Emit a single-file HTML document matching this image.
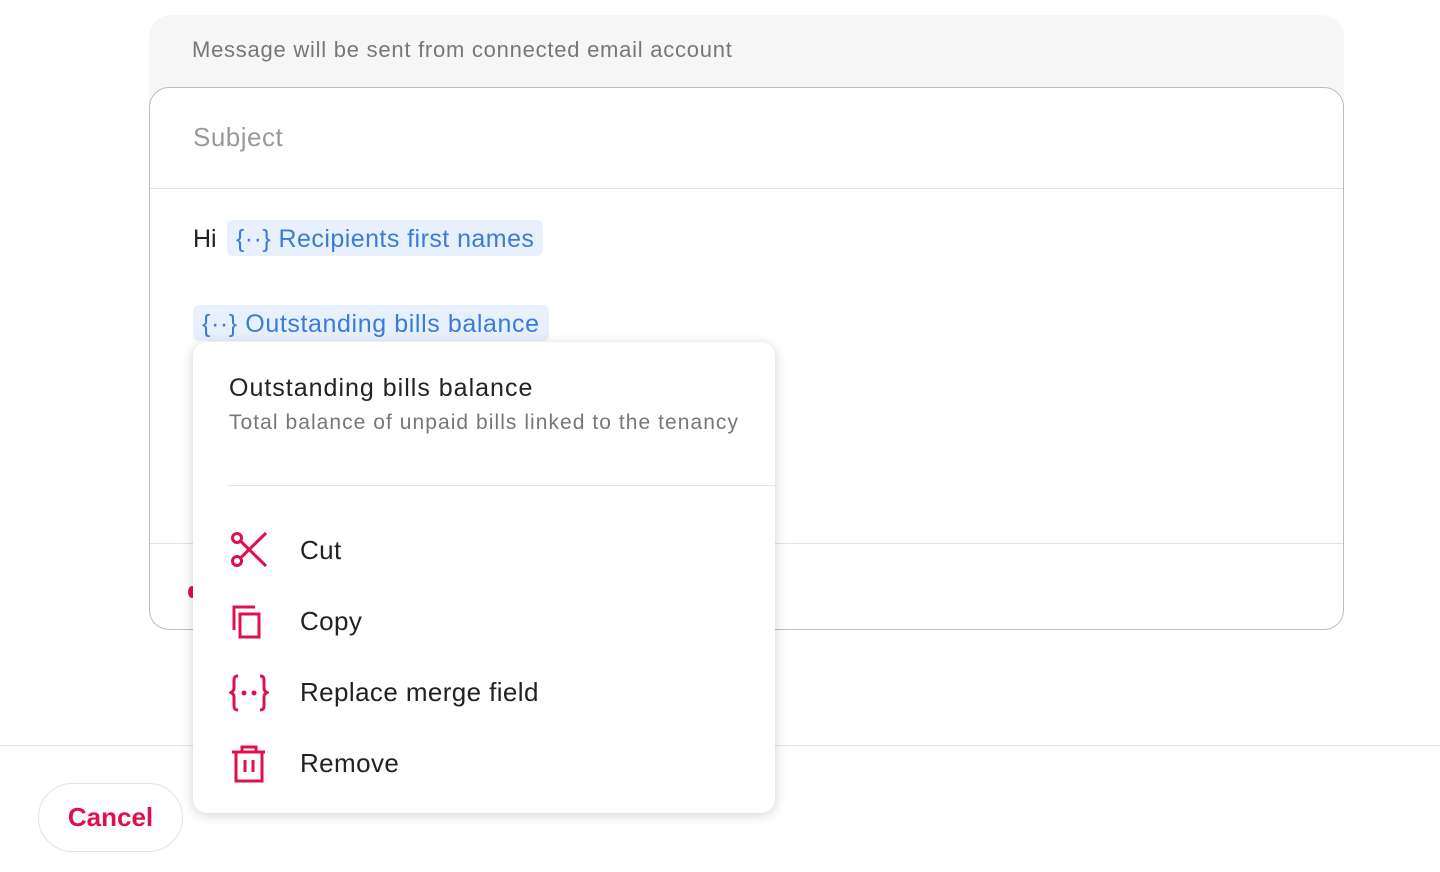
<!DOCTYPE html>
<html><head><meta charset="utf-8"><style>
*{box-sizing:border-box;margin:0;padding:0}
body{width:1440px;height:872px;background:#fff;font-family:"Liberation Sans",Arial,sans-serif;position:relative;overflow:hidden}
.gray{position:absolute;left:149px;top:15px;width:1195px;height:100px;background:#f6f6f6;border-radius:22px 22px 0 0}
.gray span{position:absolute;left:43px;top:22px;font-size:22px;color:#777;letter-spacing:0.75px}
.box{position:absolute;left:149px;top:87px;width:1195px;height:543px;border:1.5px solid #bdbdbd;border-radius:20px;background:#fff}
.abs{position:absolute}
.chip{position:absolute;background:#e7f0fc;color:#3b7cd6;border-radius:6px;font-size:25px;height:36px;line-height:38px;padding:0 9px;letter-spacing:0.45px}
.pop{position:absolute;left:193px;top:342px;width:582px;height:471px;background:#fff;border-radius:14px;box-shadow:0 2px 12px rgba(0,0,0,.18)}
.item{position:absolute;left:107px;font-size:26px;color:#222;letter-spacing:0.4px}
svg.ic{position:absolute;left:36px}
</style></head><body>
<div class="gray"><span>Message will be sent from connected email account</span></div>
<div class="box">
 <div class="abs" style="left:43px;top:34px;font-size:26px;color:#999;letter-spacing:0.5px">Subject</div>
 <div class="abs" style="left:0;top:100px;width:100%;border-top:1.5px solid #e2e2e2"></div>
 <div class="abs" style="left:43px;top:137px;font-size:25px;color:#222">Hi</div>
 <div class="chip" style="left:77px;top:132px">{··} Recipients first names</div>
 <div class="chip" style="left:43px;top:217px;letter-spacing:0.6px">{··} Outstanding bills balance</div>
 <div class="abs" style="left:0;top:455px;width:100%;border-top:1.5px solid #e2e2e2"></div>
 <div class="abs" style="left:38px;top:498px;width:8px;height:12px;border-radius:50%;background:#e0104e"></div>
</div>
<div class="abs" style="left:0;top:745px;width:1440px;border-top:1.5px solid #e4e4e4"></div>
<div class="abs" style="left:38px;top:783px;width:145px;height:69px;border:1.5px solid #e2e2e2;border-radius:35px;color:#e0104e;font-size:26px;font-weight:bold;text-align:center;line-height:66px">Cancel</div>
<div class="pop">
 <div class="abs" style="left:36px;top:32px;font-size:25px;color:#222;letter-spacing:1px">Outstanding bills balance</div>
 <div class="abs" style="left:36px;top:69px;font-size:21px;color:#777;letter-spacing:1.05px">Total balance of unpaid bills linked to the tenancy</div>
 <div class="abs" style="left:35px;top:143px;width:547px;border-top:1.5px solid #e4e4e4"></div>
 <svg class="ic" style="top:188px" width="40" height="40" viewBox="0 0 40 40" fill="none" stroke="#e0104e" stroke-width="3"><circle cx="8" cy="8" r="4.5"/><circle cx="8" cy="31" r="4.5"/><path d="M11.5 11 L37 36 M11.5 28 L37 3"/></svg>
 <div class="item" style="top:193px">Cut</div>
 <svg class="ic" style="top:260px" width="40" height="40" viewBox="0 0 40 40" fill="none" stroke="#e0104e" stroke-width="3"><path d="M5 28 V5 H26"/><rect x="11" y="12" width="19" height="23"/></svg>
 <div class="item" style="top:264px">Copy</div>
 <svg class="ic" style="top:331px" width="40" height="40" viewBox="0 0 40 40" fill="none" stroke="#e0104e" stroke-width="3"><path d="M9 3 C5 3 5 5 5 9 V15 C5 18 3 19 2 19.5 C3 20 5 21 5 24 V31 C5 35 5 37 9 37 M31 3 C35 3 35 5 35 9 V15 C35 18 37 19 38 19.5 C37 20 35 21 35 24 V31 C35 35 35 37 31 37"/><circle cx="15" cy="20" r="1" fill="#e0104e"/><circle cx="25" cy="20" r="1" fill="#e0104e"/></svg>
 <div class="item" style="top:335px">Replace merge field</div>
 <svg class="ic" style="top:402px" width="40" height="40" viewBox="0 0 40 40" fill="none" stroke="#e0104e" stroke-width="3"><path d="M3 8 H36 M13 8 V3 H27 V8 M7 8 V37 H33 V8 M16 16 V28 M24 16 V28"/></svg>
 <div class="item" style="top:406px">Remove</div>
</div>
</body></html>
